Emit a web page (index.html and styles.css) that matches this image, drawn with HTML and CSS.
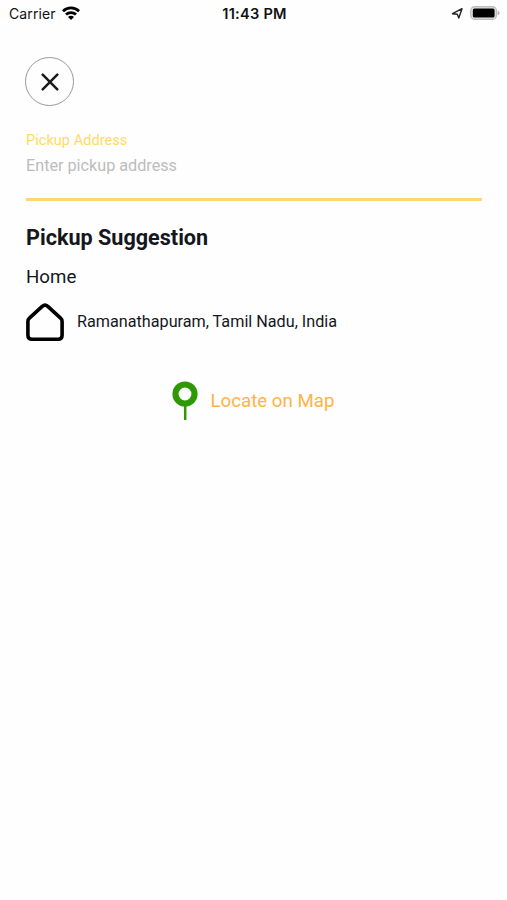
FILE: index.html
```html
<!DOCTYPE html>
<html lang="en">
<head>
    <meta charset="UTF-8">
    <meta name="viewport" content="width=device-width, initial-scale=1.0">
    <title>Pickup Address</title>
    <link rel="stylesheet" href="styles.css">
</head>
<body>

<header class="status-bar">
    <div class="carrier">
        <span class="carrier-name">Carrier</span>
        <svg class="wifi" width="18" height="14" viewBox="0 0 18 14" fill="none" stroke="#000" stroke-width="2.8">
            <path d="M1 5.2a11.4 11.4 0 0 1 16 0"/>
            <path d="M4 8.6a7.2 7.2 0 0 1 10 0"/>
            <path d="M9 14 6 11a4.2 4.2 0 0 1 6 0z" fill="#000" stroke="none"/>
        </svg>
    </div>
    <div class="time">11:43 PM</div>
    <div class="status-icons">
        <svg width="12" height="12" viewBox="0 0 12 12" fill="none" stroke="#222" stroke-width="1.4" stroke-linejoin="round">
            <path d="M1.5 6.7 11 1.7 7.8 11 6.3 7.3z"/>
        </svg>
        <svg width="30" height="14" viewBox="0 0 30 14">
            <rect x="0.8" y="0.8" width="25.6" height="12.4" rx="3.8" fill="#e8e8e8" stroke="#bdbdbd" stroke-width="1.4"/>
            <rect x="2.8" y="2.5" width="21.8" height="9" rx="1.6" fill="#000"/>
            <path d="M27.6 4.6q2 .8 2 2.4t-2 2.4z" fill="#b5b5b5"/>
        </svg>
    </div>
</header>

<main class="container">
    <button class="close-button" aria-label="Close">
        <svg width="18" height="18" viewBox="0 0 18 18" stroke="#1a1a1a" stroke-width="2.5" stroke-linecap="round">
            <path d="M1.7 1.7 16.3 16.3M16.3 1.7 1.7 16.3"/>
        </svg>
    </button>

    <label class="address-label" for="pickup">Pickup Address</label>
    <input class="address-input" id="pickup" type="text" placeholder="Enter pickup address">

    <h1>Pickup Suggestion</h1>
    <h2>Home</h2>

    <div class="suggestion">
        <svg width="38" height="40" viewBox="0 0 38 40" fill="none" stroke="#000" stroke-width="3.6" stroke-linejoin="round">
            <path d="M1.9 18.4q0-2 1.5-3.3L16.2 3.4q2.8-2.4 5.6 0l12.8 11.7q1.5 1.3 1.5 3.3V32.2q0 4-4 4H5.9q-4 0-4-4z"/>
        </svg>
        <span>Ramanathapuram, Tamil Nadu, India</span>
    </div>

    <div class="locate">
        <svg width="26" height="40" viewBox="0 0 26 40" fill="none" stroke="#2f9905">
            <circle cx="13" cy="13" r="9.5" stroke-width="6.2"/>
            <path d="M13.2 25v14" stroke-width="2.5"/>
        </svg>
        <span>Locate on Map</span>
    </div>
</main>

</body>
</html>
```

FILE: styles.css
```css
body {
    font-family: Roboto, Arial, sans-serif;
    margin: 0;
    background-color: #fefefe;
    color: #15171c;
}
.status-bar {
    display: grid;
    grid-template-columns: 1fr auto 1fr;
    align-items: center;
    height: 26px;
    padding: 0 7px 2px 9px;
    font-family: Inter, sans-serif;
    font-size: 14px;
    color: #111;
}
.carrier {
    display: flex;
    align-items: center;
    gap: 6px;
}
.carrier-name {
    letter-spacing: 0.1px;
}
.wifi {
    margin-bottom: 1px;
}
.time {
    padding-top: 2px;
    font-size: 14.6px;
    font-weight: 600;
    letter-spacing: 0.25px;
}
.status-icons {
    display: flex;
    align-items: center;
    justify-content: flex-end;
    gap: 7px;
}
.container {
    padding: 29px 25px 0 26px;
}
.close-button {
    display: flex;
    align-items: center;
    justify-content: center;
    width: 49px;
    height: 49px;
    margin-left: -1px;
    padding: 0;
    background: none;
    border: 1.5px solid #999;
    border-radius: 50%;
}
.address-label {
    display: block;
    margin-top: 24px;
    font-size: 14.6px;
    line-height: 20px;
    color: #ffdb61;
}
.address-input {
    display: block;
    box-sizing: border-box;
    width: 100%;
    height: 51px;
    padding: 0 0 18px;
    background: none;
    border: none;
    border-bottom: 3px solid #ffd772;
    outline: none;
    font-family: inherit;
    font-size: 16.2px;
}
.address-input::placeholder {
    color: #bcbcbc;
}
h1 {
    margin: 23px 0 0;
    font-size: 21.6px;
    line-height: 28px;
}
h2 {
    margin: 13px 0 0;
    font-size: 18.7px;
    font-weight: 400;
    line-height: 24px;
}
.suggestion {
    display: flex;
    align-items: center;
    gap: 13px;
    margin-top: 14px;
    font-size: 16.2px;
}
.suggestion span {
    padding-bottom: 4px;
}
.locate {
    display: flex;
    align-items: center;
    justify-content: center;
    gap: 13px;
    margin-top: 38px;
    padding-right: 2px;
    font-size: 18.7px;
    color: #ffb347;
}
```
